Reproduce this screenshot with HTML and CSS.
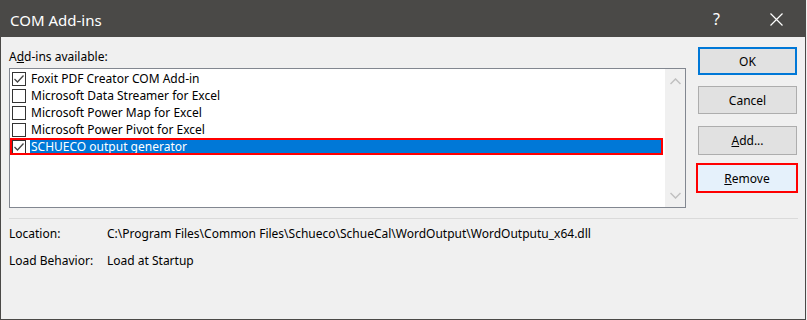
FILE: index.html
```html
<!DOCTYPE html>
<html lang="en">
<head>
    <meta charset="UTF-8">
    <title>COM Add-ins</title>
    <link rel="stylesheet" href="styles.css">
</head>
<body>
    <div class="window">
        <div class="titlebar">
            <span class="title">COM Add-ins</span>
            <span class="help">?</span>
            <span class="close">
                <svg width="13" height="13" viewBox="0 0 13 13"><path d="M0.5 0.5 L12.5 12.5 M12.5 0.5 L0.5 12.5" stroke="#fff" stroke-width="1.2" fill="none"/></svg>
            </span>
        </div>
        <div class="content">
            <div class="main">
                <div class="left">
                    <div class="label">A<u>d</u>d-ins available:</div>
                    <div class="listbox">
                        <ul class="items">
                            <li class="item"><span class="check checked"><svg width="12" height="12" viewBox="0 0 12 12"><path d="M1.5 6 L4.5 9 L10.5 2.5" stroke="#444" stroke-width="1.3" fill="none"/></svg></span><span class="name">Foxit PDF Creator COM Add-in</span></li>
                            <li class="item"><span class="check"></span><span class="name">Microsoft Data Streamer for Excel</span></li>
                            <li class="item"><span class="check"></span><span class="name">Microsoft Power Map for Excel</span></li>
                            <li class="item"><span class="check"></span><span class="name">Microsoft Power Pivot for Excel</span></li>
                            <li class="item selected"><span class="check checked"><svg width="12" height="12" viewBox="0 0 12 12"><path d="M1.5 6 L4.5 9 L10.5 2.5" stroke="#444" stroke-width="1.3" fill="none"/></svg></span><span class="name">SCHUECO output generator</span></li>
                        </ul>
                        <div class="scrollbar">
                            <svg width="11" height="7" viewBox="0 0 11 7"><path d="M0.5 6 L5.5 1 L10.5 6" stroke="#c0c0c0" stroke-width="1.5" fill="none"/></svg>
                            <svg width="11" height="7" viewBox="0 0 11 7"><path d="M0.5 1 L5.5 6 L10.5 1" stroke="#c0c0c0" stroke-width="1.5" fill="none"/></svg>
                        </div>
                    </div>
                </div>
                <div class="buttons">
                    <button class="btn default">OK</button>
                    <button class="btn">Cancel</button>
                    <button class="btn add"><u>A</u>dd...</button>
                    <button class="btn marked"><u>R</u>emove</button>
                </div>
            </div>
            <div class="separator"></div>
            <div class="info">
                <span>Location:</span>
                <span>C:\Program Files\Common Files\Schueco\SchueCal\WordOutput\WordOutputu_x64.dll</span>
                <span>Load Behavior:</span>
                <span>Load at Startup</span>
            </div>
        </div>
    </div>
</body>
</html>
```

FILE: styles.css
```css
body {
    margin: 0;
    padding: 0;
    background: #f0f0f0;
    font-family: 'Noto Sans', 'Open Sans', sans-serif;
    font-size: 12px;
    color: #000;
}
.window {
    width: 806px;
    height: 320px;
    box-sizing: border-box;
    border: 1px solid #4a4947;
    background: #f0f0f0;
    display: flex;
    flex-direction: column;
}
.titlebar {
    height: 36px;
    background: #4a4947;
    color: #fff;
    display: flex;
    align-items: center;
    padding-left: 9px;
}
.title {
    font-size: 15px;
    flex: 1;
    margin-top: 1px;
}
.help {
    font-size: 16px;
    width: 10px;
    margin-right: 47px;
}
.close {
    display: flex;
    width: 13px;
    margin-right: 22px;
}
.content {
    padding: 0 7px 0 8px;
}
.main {
    display: flex;
    gap: 12px;
}
.left {
    width: 677px;
    padding-top: 12px;
}
.label {
    line-height: 16px;
    height: 16px;
}
.listbox {
    margin-top: 3px;
    height: 140px;
    box-sizing: border-box;
    border: 1px solid #828790;
    background: #fff;
    display: flex;
}
.items {
    list-style: none;
    margin: 0;
    padding: 1px 0 0 0;
    flex: 1;
}
.item {
    height: 17px;
    display: flex;
    align-items: center;
}
.check {
    width: 14px;
    height: 14px;
    box-sizing: border-box;
    border: 1px solid #333;
    background: #fff;
    margin-left: 2px;
    margin-right: 4px;
    display: flex;
    align-items: center;
    justify-content: center;
}
.name {
    line-height: 17px;
    padding-left: 1px;
    white-space: nowrap;
}
.item.selected {
    outline: 2px solid #ff0000;
    outline-offset: -2px;
    margin-right: 2px;
}
.item.selected .name {
    flex: 1;
    background: #0078d7;
    color: #fff;
}
.scrollbar {
    width: 20px;
    background: #f0f0f0;
    display: flex;
    flex-direction: column;
    align-items: center;
    justify-content: space-between;
    padding: 9px 0 8px 0;
}
.buttons {
    display: flex;
    flex-direction: column;
    padding-top: 10px;
    width: 99px;
}
.btn {
    height: 28px;
    box-sizing: border-box;
    background: #e1e1e1;
    border: 1px solid #adadad;
    font-family: inherit;
    font-size: 12px;
    color: #000;
    padding: 0;
    margin-bottom: 11px;
}
.btn.default {
    border: 2px solid #0078d7;
}
.btn.add {
    margin-top: 1px;
    height: 29px;
}
.btn.marked {
    background: #e5f1fb;
    border: 2px solid #ff0000;
    height: 30px;
    width: 102px;
    margin-left: -2px;
    margin-top: -3px;
}
.separator {
    height: 1px;
    background: #dadada;
    margin-top: 10px;
    margin-right: 0;
}
.info {
    display: grid;
    grid-template-columns: 98px auto;
    row-gap: 11px;
    margin-top: 7px;
    line-height: 16px;
}
```
